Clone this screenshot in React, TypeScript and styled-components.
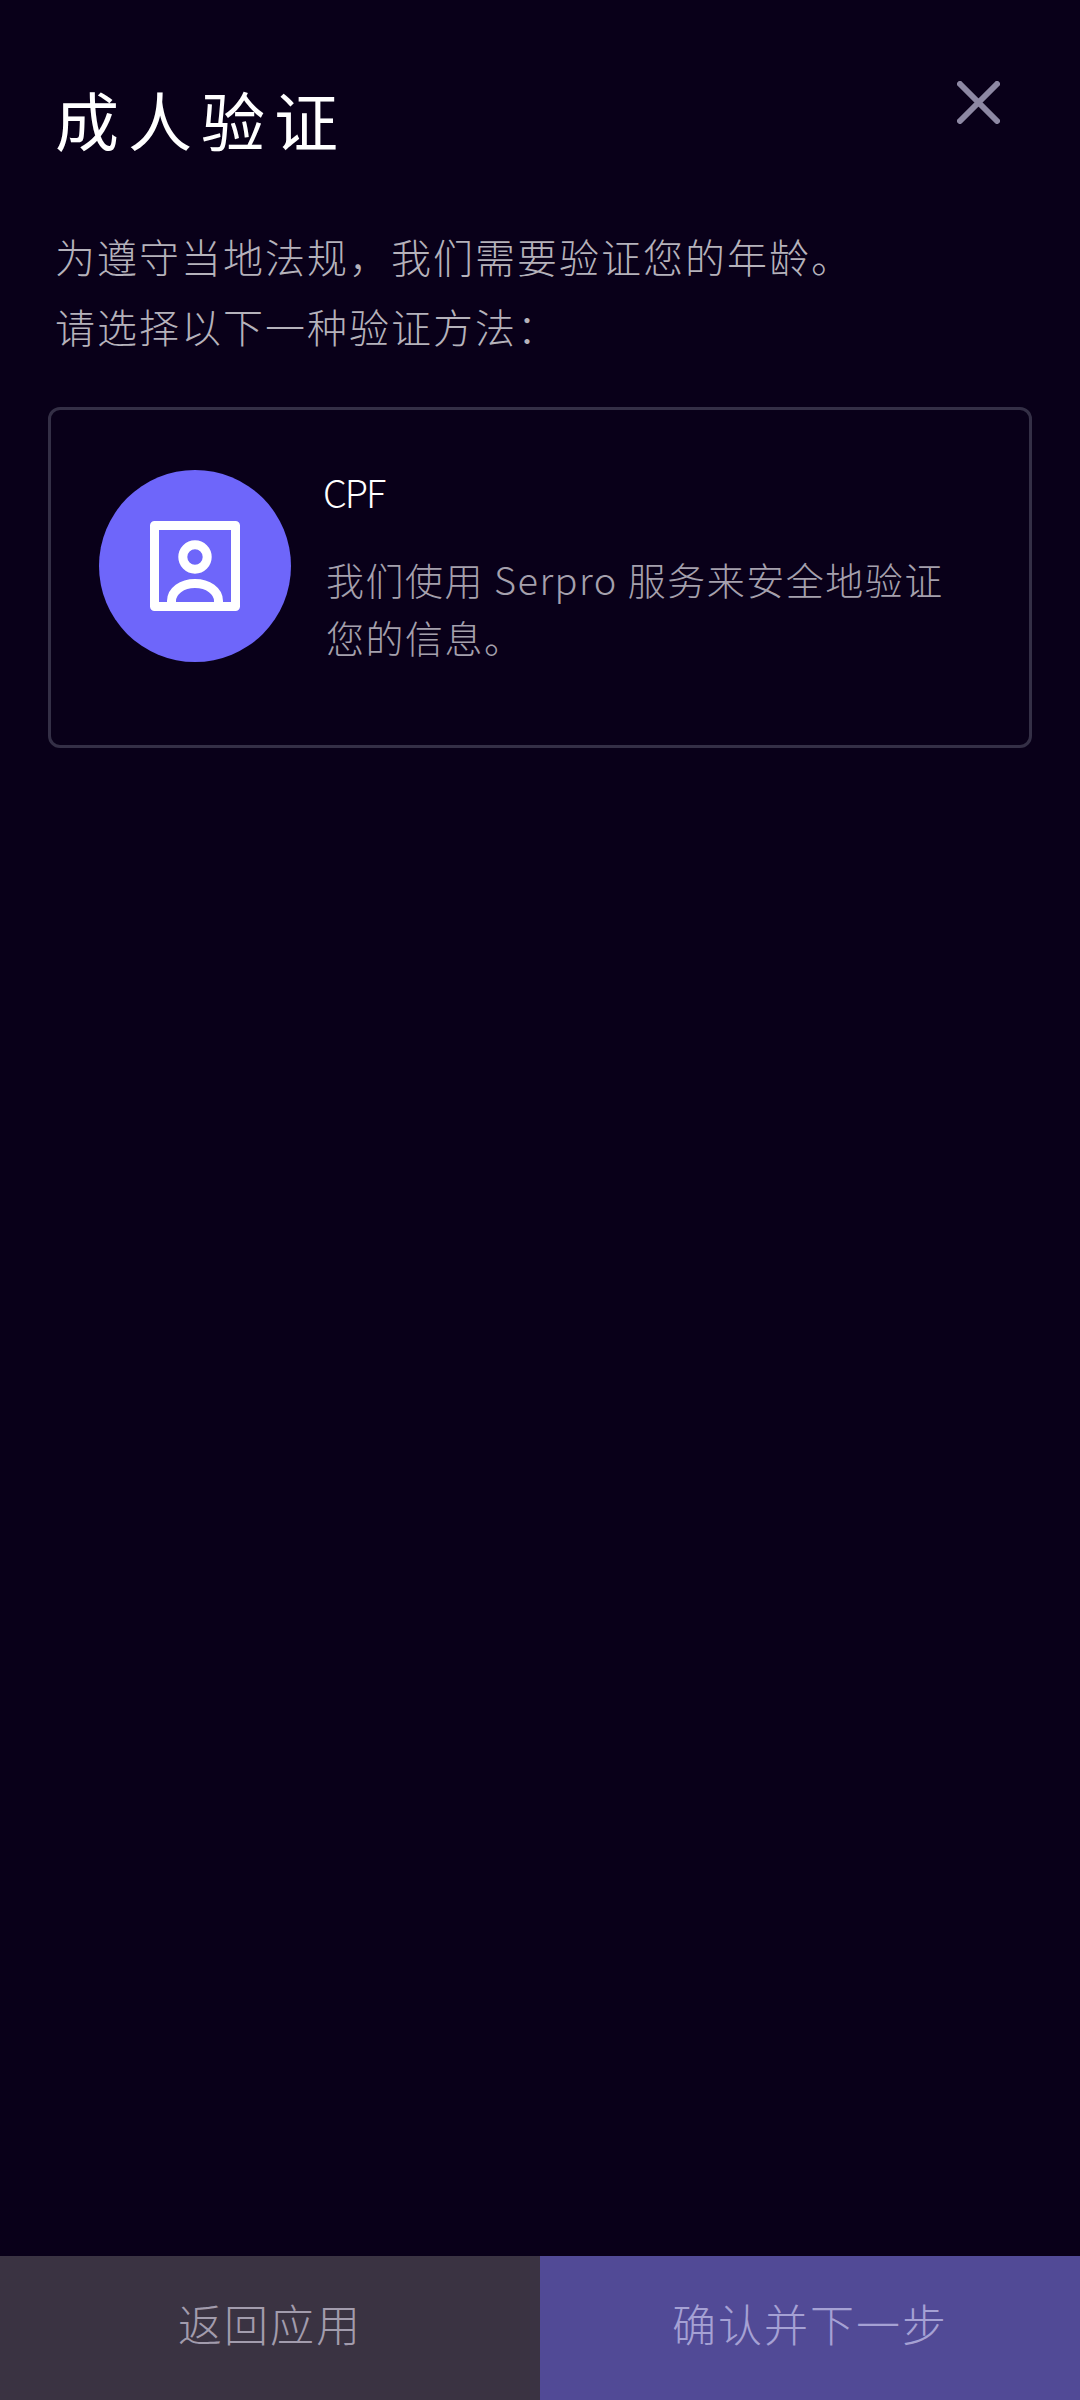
import React from "react";
import styled, { createGlobalStyle } from "styled-components";

const GlobalStyle = createGlobalStyle`
    html, body {
        margin: 0;
        padding: 0;
        background: #090019;
    }
    * {
        box-sizing: border-box;
    }
`;

const Page = styled.div`
    width: 1080px;
    height: 2400px;
    display: flex;
    flex-direction: column;
    background: #090019;
    font-family: "Noto Sans CJK SC", "Noto Sans", sans-serif;
    font-weight: 300;
`;
const Content = styled.main`
    flex: 1;
    padding: 76px 48px 0;
`;
const Header = styled.header`
    display: flex;
    justify-content: space-between;
    align-items: flex-start;
    padding: 0 32px 0 7px;
    height: 145px;
`;
const Title = styled.h1`
    margin: 0;
    font-size: 64px;
    line-height: 84px;
    font-weight: 400;
    letter-spacing: 9px;
    color: #ffffff;
`;
const CloseButton = styled.button`
    display: flex;
    width: 43px;
    height: 43px;
    margin-top: 5px;
    padding: 0;
    border: none;
    background: none;
`;
const Intro = styled.p`
    margin: 0;
    padding-left: 7px;
    font-size: 40px;
    line-height: 70px;
    letter-spacing: 2px;
    color: #b5b2bb;
`;
const MethodCard = styled.section`
    display: flex;
    align-items: flex-start;
    gap: 32px;
    height: 341px;
    margin-top: 46px;
    padding: 60px 75px 0 48px;
    border: 3px solid #342f46;
    border-radius: 12px;
`;
const Avatar = styled.div`
    flex: none;
    display: flex;
    align-items: center;
    justify-content: center;
    width: 192px;
    height: 192px;
    border-radius: 50%;
    background: #6e66fa;
`;
const MethodText = styled.div`
    flex: 1;
    min-width: 0;
`;
const MethodName = styled.div`
    font-size: 38px;
    line-height: 44px;
    letter-spacing: -2px;
    color: #ffffff;
`;
const MethodDesc = styled.p`
    margin: 36px 0 0;
    padding-left: 3px;
    font-size: 38px;
    line-height: 58px;
    letter-spacing: 1.5px;
    color: #a5a0ad;
`;
const Footer = styled.footer`
    display: flex;
    height: 144px;
`;
const FooterButton = styled.button<{ $primary?: boolean }>`
    flex: 1;
    padding: 0 0 10px;
    border: none;
    font-family: inherit;
    font-weight: 300;
    font-size: 44px;
    letter-spacing: 2px;
    background: ${(p) => (p.$primary ? "#514a96" : "#3a3342")};
    color: ${(p) => (p.$primary ? "#a5a1d4" : "#a29cad")};
`;

const App = (): JSX.Element => {
    return (
        <>
            <GlobalStyle />
            <Page>
                <Content>
                    <Header>
                        <Title>成人验证</Title>
                        <CloseButton aria-label="关闭">
                            <svg width="43" height="43" viewBox="0 0 43 43" fill="none">
                                <path
                                    d="M3 3 L40 40 M40 3 L3 40"
                                    stroke="#8d88a3"
                                    strokeWidth="6"
                                    strokeLinecap="round"
                                />
                            </svg>
                        </CloseButton>
                    </Header>
                    <Intro>
                        为遵守当地法规，我们需要验证您的年龄。
                        <br />
                        请选择以下一种验证方法：
                    </Intro>
                    <MethodCard>
                        <Avatar>
                            <svg width="90" height="90" viewBox="0 0 90 90" fill="none">
                                <rect
                                    x="4.5"
                                    y="4.5"
                                    width="81"
                                    height="81"
                                    stroke="#ffffff"
                                    strokeWidth="9"
                                    strokeLinejoin="round"
                                />
                                <circle cx="45" cy="36" r="12.2" stroke="#ffffff" strokeWidth="9" />
                                <path
                                    d="M21.5 82 V80 C21.5 70 32 62.5 45 62.5 C58 62.5 68.5 70 68.5 80 V82"
                                    stroke="#ffffff"
                                    strokeWidth="9"
                                />
                            </svg>
                        </Avatar>
                        <MethodText>
                            <MethodName>CPF</MethodName>
                            <MethodDesc>我们使用 Serpro 服务来安全地验证您的信息。</MethodDesc>
                        </MethodText>
                    </MethodCard>
                </Content>
                <Footer>
                    <FooterButton>返回应用</FooterButton>
                    <FooterButton $primary>确认并下一步</FooterButton>
                </Footer>
            </Page>
        </>
    );
};

export default App;
